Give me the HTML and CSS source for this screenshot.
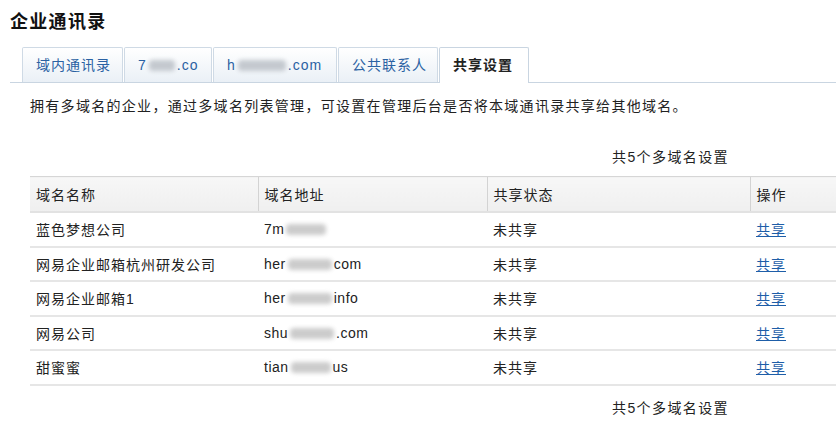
FILE: index.html
```html
<!DOCTYPE html>
<html lang="zh-CN">
<head>
<meta charset="utf-8">
<title>企业通讯录</title>
<link rel="stylesheet" href="styles.css">
</head>
<body>
<div class="page">
  <h1 class="title">企业通讯录</h1>
  <div class="tabs">
    <div class="tab">域内通讯录</div>
    <div class="tab">7<span class="blur b-t2"></span>.co</div>
    <div class="tab">h<span class="blur b-t3"></span>.com</div>
    <div class="tab">公共联系人</div>
    <div class="tab active">共享设置</div>
  </div>
  <div class="content">
    <p class="desc">拥有多域名的企业，通过多域名列表管理，可设置在管理后台是否将本域通讯录共享给其他域名。</p>
    <div class="summary">共5个多域名设置</div>
    <table class="grid">
      <colgroup>
        <col class="c1"><col class="c2"><col class="c3"><col class="c4">
      </colgroup>
      <thead>
        <tr><th>域名名称</th><th>域名地址</th><th>共享状态</th><th>操作</th></tr>
      </thead>
      <tbody>
        <tr><td>蓝色梦想公司</td><td class="dom">7m<span class="blur b-r1"></span></td><td>未共享</td><td><a href="#">共享</a></td></tr>
        <tr><td>网易企业邮箱杭州研发公司</td><td class="dom">her<span class="blur b-r2"></span>com</td><td>未共享</td><td><a href="#">共享</a></td></tr>
        <tr><td>网易企业邮箱1</td><td class="dom">her<span class="blur b-r2"></span>info</td><td>未共享</td><td><a href="#">共享</a></td></tr>
        <tr><td>网易公司</td><td class="dom">shu<span class="blur b-r4"></span>.com</td><td>未共享</td><td><a href="#">共享</a></td></tr>
        <tr><td>甜蜜蜜</td><td class="dom">tian<span class="blur b-r5"></span>us</td><td>未共享</td><td><a href="#">共享</a></td></tr>
      </tbody>
    </table>
    <div class="summary foot">共5个多域名设置</div>
  </div>
</div>
</body>
</html>
```

FILE: styles.css
```css
html, body {
  margin: 0;
  padding: 0;
  background: #ffffff;
  overflow: hidden;
}
body {
  font-family: "Liberation Sans", "Noto Sans CJK SC", sans-serif;
  font-size: 14px;
  color: #222222;
}
.page {
  padding: 10px 0 0 10px;
}
.title {
  margin: 0;
  font-size: 18px;
  line-height: 24px;
  font-weight: bold;
  letter-spacing: 1.3px;
  color: #111111;
}
.tabs {
  display: flex;
  margin-top: 13px;
  padding-left: 12px;
  border-bottom: 1px solid #c9d5e1;
  height: 35px;
}
.tab {
  box-sizing: border-box;
  height: 35px;
  line-height: 34px;
  padding: 0 12px 0 13px;
  margin-right: 1px;
  border: 1px solid #cfdae5;
  border-bottom: none;
  border-radius: 2px 2px 0 0;
  background: linear-gradient(#ffffff, #eaf0f6);
  color: #2b62a3;
  font-size: 14px;
  letter-spacing: 1px;
  white-space: nowrap;
}
.tab:nth-child(1) { width: 101px; }
.tab:nth-child(2) { width: 88px; }
.tab:nth-child(3) { width: 124px; }
.tab:nth-child(4) { width: 100px; }
.tab.active {
  width: 90px;
  height: 36px;
  background: #ffffff;
  color: #222222;
  font-weight: bold;
  border-color: #c9d5e1;
}
.blur {
  display: inline-block;
  height: 11px;
  vertical-align: -1px;
  background: #c4c9cf;
  border-radius: 4px;
  filter: blur(2px);
  margin: 0 2px;
}
.b-t2 { width: 26px; }
.b-t3 { width: 48px; }
.b-r1 { width: 40px; background: #cccccc; }
.b-r2 { width: 44px; background: #cccccc; }
.b-r4 { width: 44px; background: #cccccc; }
.b-r5 { width: 40px; background: #cccccc; }
.content {
  padding-left: 20px;
}
.desc {
  margin: 13px 0 0 0;
  line-height: 20px;
  letter-spacing: 1.3px;
}
.summary {
  margin-top: 31px;
  line-height: 20px;
  padding-left: 582px;
  letter-spacing: 1.4px;
  white-space: nowrap;
}
.summary.foot {
  margin-top: 12px;
}
.grid {
  margin-top: 9px;
  width: 830px;
  table-layout: fixed;
  border-collapse: collapse;
}
.c1 { width: 228px; }
.c2 { width: 229px; }
.c3 { width: 263px; }
.c4 { width: 110px; }
.grid th {
  height: 34px;
  padding: 0 6px;
  text-align: left;
  font-weight: normal;
  letter-spacing: 1px;
  background: linear-gradient(#f7f7f7, #efefef);
  border-top: 1px solid #d6d6d6;
  border-bottom: 2px solid #e2e2e2;
  border-left: 1px solid #d3d3d3;
}
.grid th:first-child {
  border-left: none;
}
.grid td {
  height: 32.5px;
  padding: 0 6px;
  border-bottom: 2px solid #e6e6e6;
  letter-spacing: 1px;
  white-space: nowrap;
  color: #222222;
}
.grid td.dom {
  letter-spacing: 0.5px;
}
.grid a {
  color: #1e5ea8;
  text-decoration: underline;
}
```
